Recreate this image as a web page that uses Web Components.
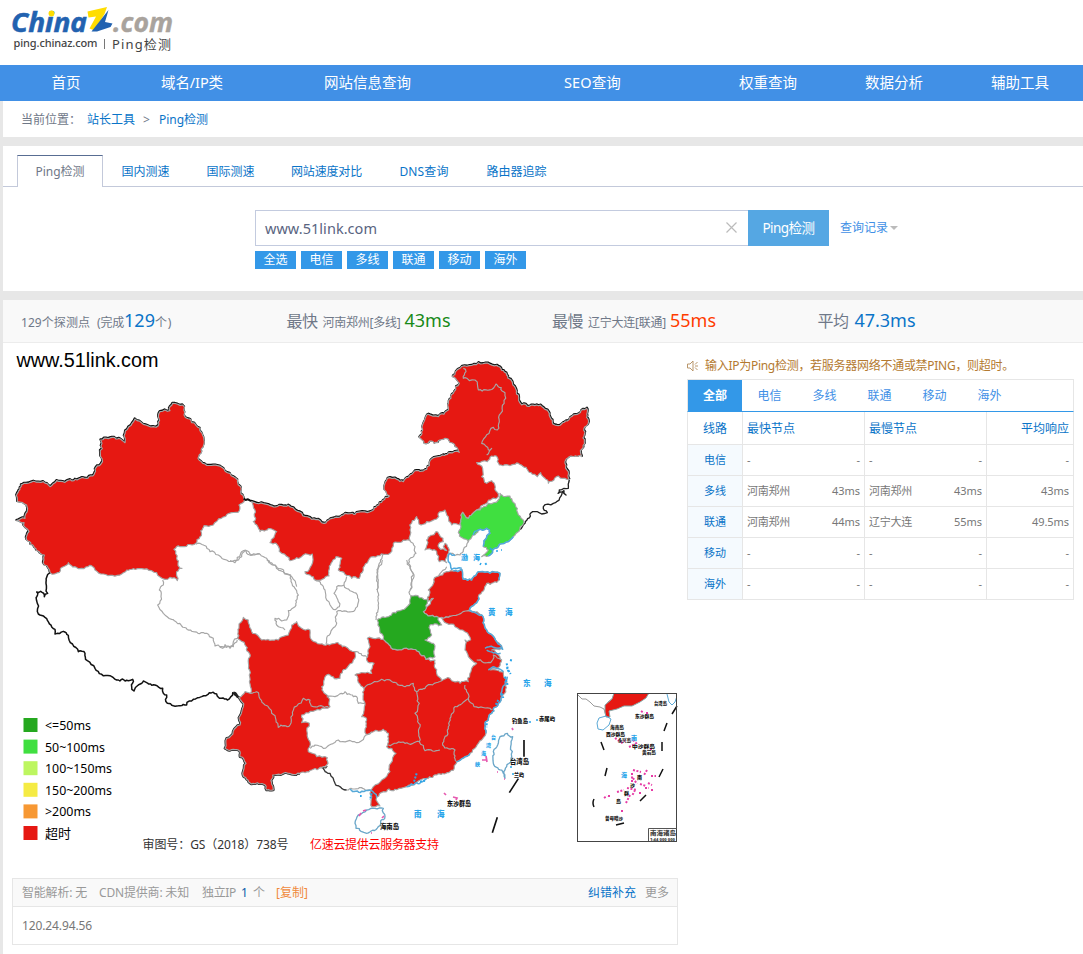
<!DOCTYPE html>
<html lang="zh-CN">
<head>
<meta charset="utf-8">
<title>Ping检测</title>
<style>
html{background:#e7e7e7}
body{margin:0;width:1083px;height:954px;overflow:hidden;background:#e7e7e7;font:12px/18px "Noto Sans","Noto Sans CJK SC",sans-serif;color:#6f7888}
</style>
</head>
<body>
<ping-page></ping-page>
<script>
const define = (name, render) => customElements.define(name, class extends HTMLElement {
  connectedCallback() {
    if (this.shadowRoot) return;
    const t = document.createElement('template');
    t.innerHTML = render(this);
    this.attachShadow({ mode: 'open' }).append(t.content.cloneNode(true));
  }
});
const f = (w, s, style = '') => `<fit-text w="${w}" style="${style}">${s}</fit-text>`;

define('ping-page', () => `<style>
:host{display:flex;flex-direction:column;height:954px}
.panel{margin-left:3px;background:#fff;flex:none}
.crumb{height:36px}.search{height:145px;margin-top:9px}.stats{margin-top:9px;background:#f9f9f9}
.main{flex:1;display:flex;align-items:flex-start}
.left{width:675px;display:flex;flex-direction:column}
</style>
<site-logo></site-logo><site-nav></site-nav>
<bread-crumb class="panel crumb"></bread-crumb>
<search-panel class="panel search"></search-panel>
<stat-bar class="panel stats"></stat-bar>
<div class="panel main"><div class="left"><china-map></china-map><ip-box></ip-box></div><result-side></result-side></div>`);

define('site-logo', () => `<style>:host{display:block;height:65px;background:#fff;flex:none}svg{display:block}</style>
<svg width="200" height="65" viewBox="0 0 200 65">
<g font-family="Open Sans,sans-serif" font-weight="700" font-style="italic" font-size="26">
<text x="11" y="31.500" fill="#2262b0" stroke="#2262b0" stroke-width=".5" textLength="76" lengthAdjust="spacingAndGlyphs">China</text>
<text x="113" y="31.500" fill="#a9a39d" stroke="#a9a39d" stroke-width=".4" textLength="60" lengthAdjust="spacingAndGlyphs">.com</text></g>
<circle cx="51.500" cy="13.500" r="2.900" fill="#fd0"/>
<path d="M87.500 11.500L107 7L104.500 14L94.500 30.500L89.500 28.500L96 16.500L88.500 17.500Z" fill="#fd0"/>
<path d="M108.500 10L105 22L112.500 23.500L110.500 27L97 31.500L91.500 31.500Z" fill="#2262b0"/>
<g font-family="Noto Sans,Noto Sans CJK SC,sans-serif" fill="#444">
<text x="13.500" y="47" font-size="11" font-weight="500" textLength="84">ping.chinaz.com</text>
<path d="M104.500 39V49" stroke="#777"/>
<text x="112" y="48.500" font-size="13" textLength="59">Ping检测</text></g></svg>`);

define('site-nav', () => `<style>
:host{display:grid;grid-template-columns:126px 126px 225px 225px 126px 126px 126px;padding-left:3px;height:36px;background:#4190e6;color:#fff;font-size:14.500px;line-height:34px;text-align:center;flex:none}
</style>` + [['首页',29],['域名/IP类',62],['网站信息查询',87],['SEO查询',57],['权重查询',58],['数据分析',58],['辅助工具',58]].map(([s,w]) => `<a>${f(w,s)}</a>`).join(''));

define('bread-crumb', () => `<style>
:host{display:flex;align-items:center;padding:2px 0 0 18px;box-sizing:border-box}
</style>${f(60,'当前位置：','margin-right:6px')}${f(48,'站长工具','color:#0a74c8;margin-right:8px')}${f(7,'&gt;','margin-right:9px')}${f(49,'Ping检测','color:#0a74c8')}`);

define('search-panel', () => `<style>
:host{display:flex;flex-direction:column}
.tabs{display:grid;grid-template-columns:14px 86px 85px 85px 107px 88px 97px 1fr;height:41px;padding-top:9px;box-sizing:border-box;line-height:33px;text-align:center;color:#0a74c8;background:linear-gradient(#c3c9da,#c3c9da) 0 100%/100% 1px no-repeat}
.on{border:1px solid #c3c9da;border-top-color:#586d92;border-bottom:0;background:#fff;color:#6f7888;line-height:32px;height:31px}
.row{display:flex;margin:23px 0 0 252px;height:36px;align-items:center}
.in{display:flex;align-items:center;justify-content:space-between;width:493px;height:36px;box-sizing:border-box;border:1px solid #c3cbdf;border-right:0;padding:0 11px 1px 9px;color:#59647f;font-size:14.500px}
.btn{width:81px;line-height:36px;background:#55a7e3;color:#fff;font-size:13.500px;text-align:center;margin-right:11px}
.tri{border:4px solid transparent;border-top:4px solid #bbb;border-bottom:0;margin-left:2px}
.tags{display:flex;gap:5px;margin:5px 0 0 252px}
.tags a{width:41px;height:18px;line-height:18px;text-align:center;background:#3398e8;color:#fff}
</style>
<div class="tabs"><i></i><a class="on">${f(49,'Ping检测')}</a><a>${f(48,'国内测速')}</a><a>${f(48,'国际测速')}</a><a>${f(71,'网站速度对比')}</a><a>${f(49,'DNS查询')}</a><a>${f(60,'路由器追踪')}</a></div>
<div class="row"><div class="in">${f(112,'www.51link.com')}<svg width="11" height="11" viewBox="0 0 11 11"><path d="M.5.5l10 10M10.500.5l-10 10" stroke="#bbb" stroke-width="1.200"/></svg></div>
<div class="btn">${f(52,'Ping检测')}</div>${f(48,'查询记录','color:#4190e6')}<i class="tri"></i></div>
<div class="tags">${['全选','电信','多线','联通','移动','海外'].map(s => `<a>${f(24,s)}</a>`).join('')}</div>`);

define('stat-bar', () => `<style>
:host{display:grid;grid-template-columns:265.500px 265.500px 265.500px 1fr;padding-left:18px;height:43px;box-sizing:border-box;border-bottom:1px solid #ececec;line-height:40px;white-space:nowrap}
div{display:flex;align-items:baseline;height:42px}
</style>
<div>${f(69,'129个探测点','margin-right:7px')}${f(27,'(完成')}${f(31,'129','font-size:18px;color:#0a74c8')}${f(17,'个)')}</div>
<div>${f(31,'最快','font-size:16px;margin-right:5px')}${f(78,'河南郑州[多线]','margin-right:4px')}${f(46,'43ms','font-size:18px;color:#178a17')}</div>
<div>${f(31,'最慢','font-size:16px;margin-right:5px')}${f(78,'辽宁大连[联通]','margin-right:4px')}${f(46,'55ms','font-size:18px;color:#ff3c00')}</div>
<div>${f(31,'平均','font-size:16px;margin-right:6px')}${f(61,'47.3ms','font-size:18px;color:#0a74c8')}</div>`);

/* Breaks long straight segments into a natural-looking border. The offset depends
   only on the two end points, so neighbours that share an edge stay joined. */
function rough(d) {
  const out = [];
  const split = (ax, ay, bx, by, depth) => {
    const len = Math.hypot(bx - ax, by - ay);
    if (len < 9 || !depth) { out.push(`L${bx.toFixed(1)} ${by.toFixed(1)}`); return; }
    const s = Math.sin((ax + bx) * 12.9898 + (ay + by) * 78.233) * 43758.5453;
    const flip = ax > bx || (ax === bx && ay > by) ? -1 : 1;
    const k = ((s - Math.floor(s)) - .5) * Math.min(.5, 9 / len) * flip;
    const mx = (ax + bx) / 2 - (by - ay) * k, my = (ay + by) / 2 + (bx - ax) * k;
    split(ax, ay, mx, my, depth - 1);
    split(mx, my, bx, by, depth - 1);
  };
  let x = 0, y = 0, sx = 0, sy = 0;
  for (const [, c, a, b] of d.matchAll(/([MLZ])(?:([\d.]+) ([\d.]+))?/g)) {
    if (c === 'M') { sx = x = +a; sy = y = +b; out.push(`M${x} ${y}`); }
    else if (c === 'L') { split(x, y, +a, +b, 4); x = +a; y = +b; }
    else { split(x, y, sx, sy, 4); out.push('Z'); x = sx; y = sy; }
  }
  return out.join('');
}
const p = (d, attrs = '') => `<path d="${rough(d)}" ${attrs}/>`;

/* Provinces are grouped in tiles; each tile has its own origin and a 3:1 unit. */
const XJ_EDGE = 'L133 525L133 495L120 490L92 464L80 450L87 425L72 398L50 392L75 385L80 345L68 338L52 335L52 310L72 280L130 275L150 290L170 272L195 277L278 258L285 238L303 222L306 160L302 150L348 147L365 150L375 158L372 138L405 87L430 103L460 110L475 107L480 65L510 62L518 40L548 45L552 75L575 98L600 115L612 150L605 185L594 205L615 222L665 232L690 250L713 270L722 305L733 328';
const XJ = 'M150 548' + XJ_EDGE + 'L717 345L714 367L688 370L664 385L640 405L612 407L600 440L588 460L540 470L522 478L530 505L546 535L530 545L532 572L510 562L495 568L470 548L455 542L425 536L400 536L380 540L365 552L310 552L285 540L270 526L245 535L225 530L205 518L190 530L178 547Z';
const TIBET = 'M150 548L140 562L138 580L143 610L133 620L122 604L110 606L112 640L115 672L135 682L165 718L165 732L190 724L205 736L235 785L255 790L262 812L285 835L305 853L330 857L350 870L385 872L398 868L395 890L402 903L415 885L430 873L465 885L488 895L490 910L500 915L502 940L540 947L560 945L580 928L605 920L628 908L650 912L682 930L698 908L715 922';
const NORTH = 'L120 467L165 468L195 480L245 508L270 512L282 520L300 507L345 490L412 488L440 468L478 438L462 410L472 385L500 388L520 395L550 368L590 358L600 332L625 320L660 308L688 307L675 290L645 265L622 278L605 273L582 280L567 262L590 195L625 200L655 180L653 165L672 125L688 100L667 80L690 55L745 38L800 46L830 75L865 135L875 165L920 165L955 185L975 225L1012 213L1030 195L1070 175L1075 210L1065 230L1055 320L1018 320L1005 340L1015 365L1018 390';
const NM = 'M65 455' + NORTH + 'L1000 385L985 378L955 400L932 368L922 380L888 352L850 343L808 345L802 322L785 318L772 335L740 338L758 355L755 380L770 400L785 392L800 425L805 440L770 460L740 480L715 505L698 487L692 525L665 525L655 500L645 480L625 490L620 507L590 515L567 522L560 500L547 512L540 540L540 572L490 580L480 610L430 620L400 660L388 685L365 685L325 660L335 625L318 620L303 640L297 678L255 690L225 665L245 645L247 612L220 615L180 632L155 610L138 580L120 578L140 545L125 537L90 545L70 515L77 505Z';
const EAST = 'M665 172L685 172L745 152L785 165L800 210L830 245L845 265L815 270L845 300L838 320L812 330L850 335L860 365L845 410L835 430L815 460L795 490L798 520L785 540L750 580L710 605L690 635L620 655L560 680L490 695L470 712L480 738L455 740L450 700L460 680L510 635L512 610L528 580L500 560L505 520L490 508L460 515L438 522L440 480L425 470L435 430L432 385L405 345L455 340L462 310L440 300L450 260L442 235L490 238L525 268L580 268L618 298L645 300L650 340L665 362L690 355L720 370L745 365L755 325L770 310L745 290L735 270L735 240L752 240L735 215L705 200L680 190Z';
const SW = 'M70 172L85 180L98 220L125 240L175 240L205 225L215 195L230 185L245 205L270 210L275 240L300 252L345 250L405 275L400 300L380 325L360 355L320 345L305 380L325 412L330 440L300 450L245 465L245 488L268 490L262 520L270 545L265 575L290 590L322 593L320 615L280 628L240 640L190 640L158 645L160 690L140 690L130 672L95 672L68 640L78 610L60 590L55 570L15 565L20 535L60 495L70 440L57 412L75 395L92 400L90 290L75 255L52 235L57 200Z';
const label = (x, y, w, s, size = 5.500, fill = '#111') => `<text x="${x}" y="${y}" font-size="${size}" font-weight="900" fill="${fill}" textLength="${w}" lengthAdjust="spacingAndGlyphs">${s}</text>`;
const sea = (x, y, s, size = 7.500) => `<text x="${x}" y="${y}" font-size="${size}" font-weight="900" fill="#2aa5ea">${s}</text>`;

define('china-map', () => `<style>:host{display:block;height:535px}svg{display:block}</style>
<svg width="680" height="525" viewBox="3 343 680 525" font-family="Noto Sans,Noto Sans CJK SC,sans-serif">
<defs><clipPath id="inset"><rect x="578" y="694" width="99" height="147"/></clipPath></defs>
<g fill="none" stroke-linejoin="round">
<g transform="translate(0 390) scale(.33333)" stroke="#a6a6a6" stroke-width="3.500">
${p('M150 548' + XJ_EDGE, 'stroke="#111" stroke-width="6" transform="translate(-1 -2)"')}${p(XJ, 'fill="#e61812"')}
${p(TIBET, 'stroke="#111" stroke-width="4.500"')}
${p('M488 570L490 585L478 600L483 620L473 645L490 670L515 688L545 708L580 725L620 730L640 745L645 768L655 765L668 775L675 764L690 775L700 755L712 745L715 735M588 463L612 466L630 485L655 495L680 510L705 518L725 500L735 480L755 495L780 492')}</g>
<g transform="translate(230 350) scale(.33333)" stroke="#a6a6a6" stroke-width="3.500">
${p('M40 448L65 455' + NORTH, 'stroke="#111" stroke-width="6" transform="translate(1 -2)"')}${p(NM, 'fill="#e61812"')}
${p('M1018 390L1015 415L988 420L984 430L1000 428L1008 435L1002 422L970 460L940 470L952 488L935 492L908 485L885 520L850 558', 'stroke="#222" stroke-width="4"')}
${p('M700 55L708 65L700 85L718 92L735 90L745 120L790 115L798 102L825 128L812 190L802 240L790 232L755 280L775 300L785 295L770 315M90 612L110 625L130 645L160 665L185 680L200 710M0 632L20 632L40 602L70 615L90 612M540 572L555 590L558 610L535 640L552 680L540 720M462 612L445 650L445 690L440 720M715 575L700 600L690 615L660 610M650 650L610 700')}
${p('M810 430L825 440L840 438L862 475L880 522L850 560L805 590L775 618L755 620L775 600L760 590L780 550L770 535L745 540L715 575L685 548L692 525L698 487L715 505L740 480L775 460L805 450Z', 'fill="#40df40"')}
${p('M618 545L590 570L585 600L620 605L628 635L650 638L658 600L645 580L640 590L650 602L632 598L624 588L640 575Z', 'fill="#e61812"')}
${p('M850 560L805 590L775 618M760 590L780 550L770 535L745 540L730 555M675 615L660 610L655 635L665 658L695 655', 'stroke="#4fa9de" stroke-width="4.500"')}</g>
<g transform="translate(220 560) scale(.33333)" stroke="#a6a6a6" stroke-width="3.500">
${p('M700 33L725 28L730 58L755 60L780 35L840 40L838 60L800 70L775 110L748 150L720 170L685 172L655 172L610 155L640 115L622 125L625 90L650 50L685 35Z', 'fill="#e61812"')}
${p(EAST, 'fill="#e61812"')}
${p('M572 107L625 115L622 130L610 155L655 172L665 195L630 195L635 225L615 240L645 258L645 290L618 298L580 268L525 268L490 238L472 180L545 150L570 130Z', 'fill="#25a81f"')}
${p('M322 618L298 622', 'stroke="#444"')}
${p('M295 622L330 640L345 670L365 685L380 690', 'stroke="#333" stroke-width="4"')}
${p('M240 640L190 640L158 645L160 690L140 690L130 672L95 672L68 640L78 610L60 590L55 570L15 565L20 535L60 495L70 440L57 412L40 398', 'stroke="#222" stroke-width="8"')}
${p(SW, 'fill="#e61812"')}
${p('M0 260L20 262L40 260L52 240M92 400L110 395L135 435L155 460L175 502L210 495L218 465L250 415L270 420L280 440L325 440M405 275L440 290M320 412L345 410L375 395L410 410L415 430L435 430M270 565L285 555L310 565L355 540L410 548L455 515M380 690L450 690M432 385L485 358L555 380L580 370L590 395L620 378L665 362M590 395L598 430L585 460L600 500L598 545M505 555L555 550L598 545L615 572L660 570M735 375L745 415L705 440L690 475L668 555L705 570L710 605M745 415L762 440L815 450M770 300L812 308L820 285L845 300M195 40L212 45L222 80L235 105L225 140L205 152L200 180L185 183L165 175L170 195L195 210M140 0L165 15L195 40M487 0L470 50L475 100L468 180M560 0L580 45L575 75L570 105M285 60L315 90L320 120L340 148L358 140L355 125L342 100L350 80L372 75L412 105L412 140L395 155L350 155L345 200L320 240L318 252M372 75L380 50')}
${p('M748 150L785 165L800 210L830 245L848 268L820 262L795 265M842 280L800 270M805 330L825 322L850 335M862 350L845 410L835 430L815 460L795 490L798 520M620 655L590 668L560 680M710 605L750 580M470 712L450 690L425 694L390 688M775 110L748 150M700 33L725 28L730 58L755 60L780 35L840 40L838 60', 'stroke="#56a9d8" stroke-width="4.500"')}
${p('M405 790L415 765L440 750L490 745L495 770L475 800L440 820L408 805ZM862 520L878 530L875 590L855 630L855 655L848 635L820 610L820 575L840 530Z', 'stroke="#6ba7c9" stroke-width="4"')}
<path d="M860 310l5 25M870 300l8 2M855 350l8 25M860 322l12 20M845 400l5 14M835 420l-8 15M800 490v12M590 640l-8 25M600 665l15-3M455 700l-5 20M420 708h5M800 10l-8 6" stroke="#2aa5ea" stroke-width="6" stroke-dasharray="6 4"/>
<path d="M912 540v50M895 656l-27 42M832 772l-15 46" stroke="#111" stroke-width="5"/></g>
</g>
<path d="M490 548l2 2M496 551h2M501 550h1M481 563l-1 2M529 722h2M536 720h2M510 767h2M512 774h2" stroke="#2aa5ea" stroke-width="1.500"/>
<path d="M444 793l2 2M453 797l4 1l-1 2M512 728l1 2M486 756l1 6M482 760h4M497 772h1M504 779h1M359 816l2-3M363 811l3-1M371 833h1M382 818l2-2" stroke="#e65ab0" stroke-width="1.700" fill="none"/>
${sea(461,560,'渤',7)}${sea(473,560,'海',7)}${sea(488,614.500,'黄')}${sea(505,614.500,'海')}${sea(523,686,'东')}${sea(544,686,'海')}${sea(414,817,'南')}${sea(437,817,'海')}
${sea(491,739,'台',5)}${sea(486,747,'湾',5)}${sea(481,755,'海',5)}${sea(475,766,'峡',5)}
${label(512,723,16,'钓鱼岛')}${label(539,721,16,'赤尾屿')}${label(510,764,19,'台湾岛',6.500)}${label(514,777,10,'兰屿')}${label(447,806,24,'东沙群岛',6.500)}${label(380,829,19,'海南岛',6.500)}
<g clip-path="url(#inset)"><rect x="577" y="693" width="101" height="150" fill="#fff"/>
<path d="M614 694L613 698L608 702L606 709L606 716L604 709L600 707L594 706L590 702L586 699L582 699L578 695" fill="none" stroke="#999"/>
<path d="M614 693L612 699L605 705L605 712L606 717L610 717L609 711L617 709L624 706L632 706L640 702L646 698L649 693Z" fill="#e61812" stroke="#8aa"/>
<path d="M597 723L599 718L606 716L611 719L609 725L603 730L598 729ZM667 694L669 702L672 705L675 702L677 696" fill="none" stroke="#5ba9d6"/></g>
<path d="M677 706l-5 8M667 723l-3 8M662 742v9M663 769l-4 8M646 795l-6 6M624 823l-8 2M594 799q-2 4 0 8M607 768l-2 8M601 742l3 8" stroke="#111" stroke-width="1.500" fill="none"/>
<path d="M641 711l3 2M646 713h3M615 738l4 3M621 743l4-2M633 740l4 4M629 747l6-3M650 749h3M633 770l8 2M647 770l-3 5M651 776h5M633 778l4 6M640 784l6 2M648 783l4 2M617 792l7-2M627 788l10 2M604 798l3-2M608 796h3M630 795l-4 8M635 790l-3 6M639 793h3M622 810v3M632 773v10M645 788h4M651 790h2" stroke="#e63ca6" stroke-width="2" stroke-dasharray="2 1.500" fill="none"/>
${label(654,705,13,'台湾岛',4.500)}${label(635,718,19,'东沙群岛',5)}${label(610,729,14,'海南岛',4.500)}${label(606,736,19,'西沙群岛',5)}${label(618,742,13,'永兴岛',4.500)}${label(632,748,23,'中沙群岛',5)}${label(642,754,14,'黄岩岛',4.500)}${sea(631,740,'南',6)}${sea(621,777,'海',6)}${label(637,779,5,'南',5)}${label(630,787,5,'沙',5)}${label(624,795,5,'群',5)}${label(616,803,5,'岛',5)}${label(605,820,18,'曾母暗沙',4.500)}
<rect x="577.500" y="693.500" width="99" height="148" fill="none" stroke="#444"/>
<path d="M648.500 841V828.500H676.500" stroke="#555" fill="none"/>
${label(650,835,26,'南海诸岛',6,'#444')}${label(650,840.500,25,'1:44 000 000',4,'#444')}
<text x="16.500" y="367" font-size="20" fill="#000" font-family="Liberation Sans,sans-serif" textLength="142" lengthAdjust="spacingAndGlyphs">www.51link.com</text>
${[['#25a81f','&lt;=50ms',46],['#40df40','50~100ms',60],['#bdf660','100~150ms',67],['#f5eb44','150~200ms',67],['#f79833','&gt;200ms',46],['#e61812','超时',26]].map(([c,s,w],i) => `<rect x="23.500" y="${718+i*21.600}" width="14" height="14" fill="${c}"/><text x="45" y="${730+i*21.600}" font-size="13" fill="#000" textLength="${w}" lengthAdjust="spacingAndGlyphs">${s}</text>`).join('')}
<text x="142.500" y="849" font-size="12" fill="#333" textLength="146">审图号：GS（2018）738号</text>
<text x="310" y="849" font-size="12" fill="#f00" textLength="129">亿速云提供云服务器支持</text>
</svg>`);

define('ip-box', () => `<style>
:host{display:block;margin-left:9px;width:666px;box-sizing:border-box;height:67px;border:1px solid #e6e6e6;color:#999}
.h{display:flex;align-items:center;height:27px;background:#f9f9f9;border-bottom:1px solid #e6e6e6;padding:0 8px 0 9px}
.s{flex:1}.b{height:37px;display:flex;align-items:center;padding-left:9px;color:#777}
</style><div class="h">${f(65,'智能解析: 无','margin-right:12px')}${f(90,'CDN提供商: 未知','margin-right:13px')}${f(34,'独立IP','margin-right:5px')}${f(7,'1','color:#0a5ca8;margin-right:5px')}${f(12,'个','margin-right:11px')}${f(32,'[复制]','color:#f08a3c')}<i class="s"></i>${f(48,'纠错补充','color:#0a74c8;margin-right:9px')}${f(24,'更多')}</div><div class="b">${f(70,'120.24.94.56')}</div>`);

define('result-side', () => `<style>
:host{display:block;margin-left:9px;width:387px;padding-top:13px}
.n{display:flex;align-items:center;height:20px;color:#b47a30;gap:7px;margin-bottom:3px}
.t{display:grid;grid-template-columns:54px 55px 55px 55px 55px 55px 1fr;height:33px;box-sizing:border-box;border:1px solid #e6e6e6;border-bottom:1px solid #3398e8;line-height:32px;text-align:center;color:#4190e6}
.t .on{background:#3398e8;color:#fff;font-weight:700}
.g{display:grid;grid-template-columns:54px 121px 121px 86px;grid-template-rows:32px repeat(5,30px);gap:1px;background:#e6e6e6;border:1px solid #e6e6e6;border-top:0}
.g div{background:#fff;display:flex;align-items:center;justify-content:space-between;padding:0 4px;font-size:11px;color:#777}
.g .k{justify-content:center;padding:0;color:#0a74c8;background:#f5fafe}.g .th{color:#0a74c8;font-size:12px;background:#fff;padding-top:1px}.g .r{justify-content:flex-end}
</style>
<div class="n"><svg width="11" height="12" viewBox="0 0 11 12" fill="none" stroke="#b9966b"><path d="M.5 4v4h2.500l3 3V1L3 4Z"/><path d="M8 4.500L10.500 2M8 7.500L10.500 10M8 6h3"/></svg>${f(309,'输入IP为Ping检测，若服务器网络不通或禁PING，则超时。')}</div>
<div class="t"><a class="on">${f(24,'全部')}</a>${['电信','多线','联通','移动','海外'].map(s=>`<a>${f(24,s)}</a>`).join('')}</div>
<div class="g"><div class="k th">${f(24,'线路')}</div><div class="th">${f(48,'最快节点')}</div><div class="th">${f(48,'最慢节点')}</div><div class="th r">${f(48,'平均响应')}</div>
${[['电信'],['多线','河南郑州','43ms','河南郑州','43ms','43ms'],['联通','河南郑州','44ms','辽宁大连','55ms','49.5ms'],['移动'],['海外']].map(([k,a,b,c,d,e])=>`<div class="k">${f(22,k)}</div>`+(a?`<div>${f(43,a)}${f(28,b)}</div><div>${f(43,c)}${f(28,d)}</div><div class="r">${f(e.length>4?37:28,e)}</div>`:`<div><span>-</span><span>-</span></div><div><span>-</span><span>-</span></div><div class="r"><span>-</span></div>`)).join('')}</div>`);

/* Spreads its text over exactly w pixels by adjusting the tracking. */
customElements.define('fit-text', class extends HTMLElement {
  connectedCallback() {
    this.attachShadow({ mode: 'open' }).innerHTML = '<style>:host{display:inline-block;white-space:pre;flex:none;text-align:left}</style><slot></slot>';
    const w = +this.getAttribute('w'), n = [...this.textContent].length;
    const natural = this.getBoundingClientRect().width;
    this.style.letterSpacing = (w - natural) / n + 'px';
    this.style.width = w + 'px';
  }
});
</script>
</body>
</html>
